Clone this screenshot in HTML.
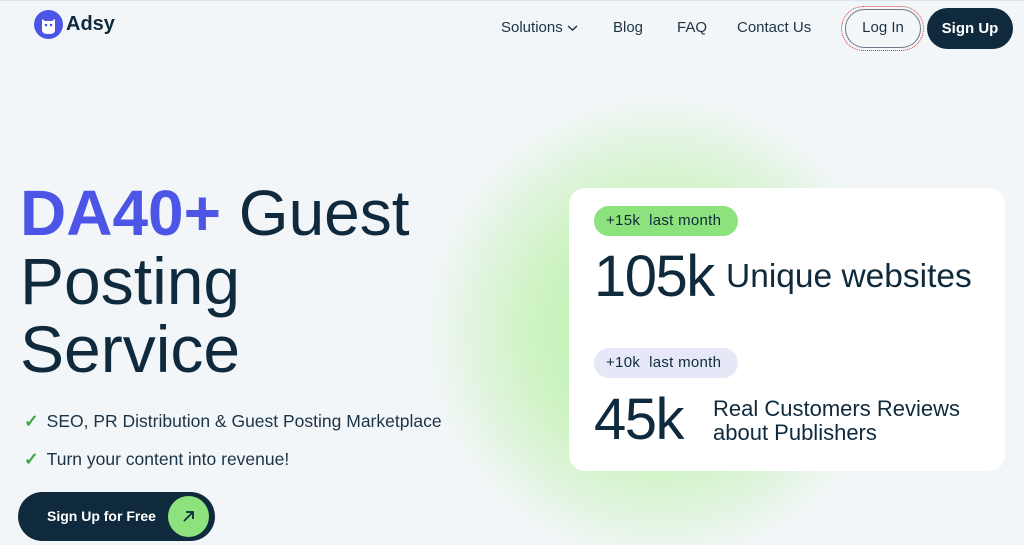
<!DOCTYPE html>
<html><head><meta charset="utf-8"><style>
*{margin:0;padding:0;box-sizing:border-box}
html,body{width:1024px;height:545px;overflow:hidden}
body{background:#f3f6f9;font-family:"Liberation Sans",sans-serif;color:#0f2a3d;position:relative}
.glow{position:absolute;left:420px;top:90px;width:480px;height:480px;border-radius:50%;background:radial-gradient(circle,#b0efa0 0%,#d0f3c6 40%,rgba(243,246,249,0) 70%)}
.abs{position:absolute}
.nav{font-size:15px;color:#1c3345;top:19px}
.card{left:569px;top:188px;width:436px;height:283px;background:#fff;border-radius:16px}
.pill{position:absolute;border-radius:16px;font-size:15px;padding:0 12px;height:30px;line-height:30px;color:#0f2a3d;letter-spacing:0.3px}
h1{position:absolute;left:20px;top:178px;font-size:66px;font-weight:400;line-height:68px;color:#0f2a3d}
.li{position:absolute;left:24px;font-size:17.5px;color:#1c3345}
.li b{color:#38a845;font-weight:700;margin-right:8px}
</style></head><body>
<div class="glow"></div>
<div class="abs" style="left:0;top:0;width:1024px;height:1px;background:#dde3ea"></div>
<svg class="abs" style="left:34px;top:10px" width="29" height="29" viewBox="0 0 29 29"><circle cx="14.5" cy="14.5" r="14.5" fill="#4c55e6"/><path d="M8 9 L11 11 H18 L21 9 V20 Q21 24 14.5 24 Q8 24 8 20Z" fill="#fff"/><circle cx="12" cy="15" r="1.3" fill="#4c55e6"/><circle cx="17" cy="15" r="1.3" fill="#4c55e6"/></svg>
<div class="abs" style="left:66px;top:13px;font-size:20px;font-weight:700;color:#0f2a3d">Adsy</div>
<div class="abs nav" style="left:501px">Solutions <svg width="11" height="8" viewBox="0 0 11 8"><path d="M1 2 L5.5 6 L10 2" stroke="#1c3345" stroke-width="1.5" fill="none"/></svg></div>
<div class="abs nav" style="left:613px">Blog</div>
<div class="abs nav" style="left:677px">FAQ</div>
<div class="abs nav" style="left:737px">Contact Us</div>
<div class="abs" style="left:841px;top:6px;width:83px;height:45px;border-radius:23px;border:1.5px dotted #d33"></div>
<div class="abs" style="left:845px;top:9px;width:76px;height:39px;border-radius:20px;border:1.5px solid #6b7a86;font-size:15px;text-align:center;line-height:36px;color:#1c3345">Log In</div>
<div class="abs" style="left:927px;top:8px;width:86px;height:41px;border-radius:21px;background:#0f2a3d;color:#fff;font-size:15px;font-weight:700;text-align:center;line-height:41px">Sign Up</div>
<h1><span style="font-size:64px"><span style="color:#4c55e6;font-weight:700">DA40+</span> Guest</span><br>Posting<br>Service</h1>
<div class="li" style="top:411px"><b>✓</b>SEO, PR Distribution &amp; Guest Posting Marketplace</div>
<div class="li" style="top:449px"><b>✓</b>Turn your content into revenue!</div>
<div class="abs" style="left:18px;top:492px;width:197px;height:49px;border-radius:25px;background:#0f2a3d;color:#fff;font-size:14px;font-weight:700;line-height:49px;padding-left:29px">Sign Up for Free</div>
<svg class="abs" style="left:168px;top:496px" width="41" height="41" viewBox="0 0 41 41"><circle cx="20.5" cy="20.5" r="20.5" fill="#8ee27e"/><path d="M16 25 L25 16 M18 16 H25 V23" stroke="#0f2a3d" stroke-width="1.8" fill="none"/></svg>
<div class="abs card">
<div class="pill" style="left:25px;top:18px;background:#8ee27e;width:144px">+15k&nbsp;&nbsp;last month</div>
<div class="abs" style="left:25px;top:55px;font-size:58px;letter-spacing:-1.5px;color:#0f2a3d">105k</div>
<div class="abs" style="left:157px;top:70px;font-size:33.5px;color:#0f2a3d">Unique websites</div>
<div class="pill" style="left:25px;top:160px;background:#e6e8f8;width:144px">+10k&nbsp;&nbsp;last month</div>
<div class="abs" style="left:25px;top:198px;font-size:58px;letter-spacing:-1.5px;color:#0f2a3d">45k</div>
<div class="abs" style="left:144px;top:209px;font-size:22px;line-height:24px;color:#0f2a3d">Real Customers Reviews<br>about Publishers</div>
</div>
</body></html>
